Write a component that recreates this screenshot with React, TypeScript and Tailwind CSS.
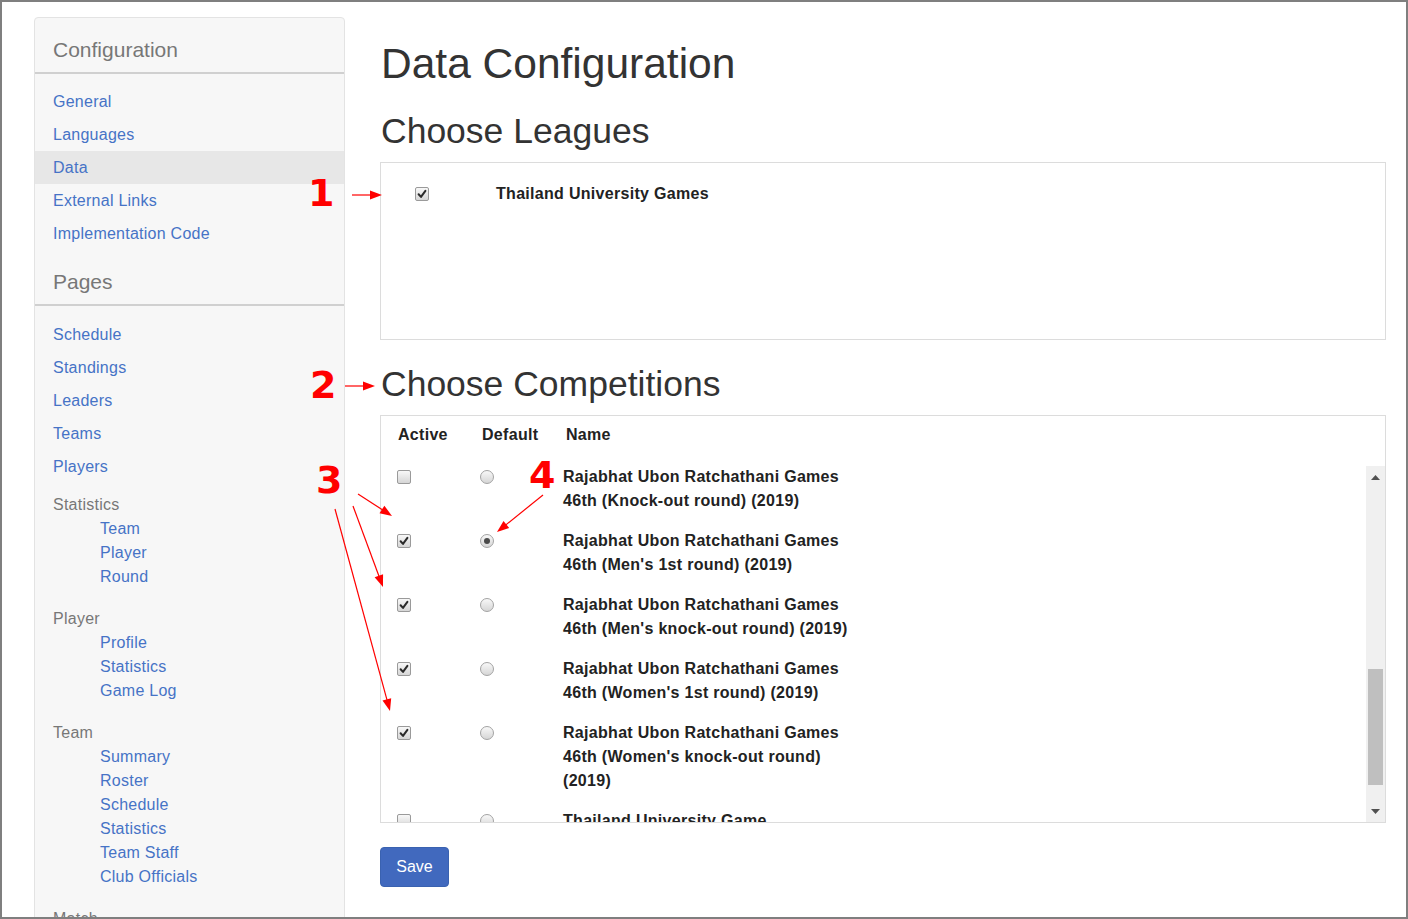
import React from "react";

const FONT = "font-['Liberation_Sans',Arial,sans-serif]";

function Checkbox({ checked }: { checked: boolean }) {
  return (
    <span className="flex h-[14px] w-[14px] items-center justify-center rounded-[2px] border border-[#9a9a9a] bg-linear-to-b from-[#f8f8f8] to-[#d6d6d6]">
      {checked && (
        <svg width="10" height="10" viewBox="0 0 10 10">
          <path d="M1.6 5.3 L4 7.9 L8.4 1.8" fill="none" stroke="#2b2b2b" strokeWidth="2" strokeLinecap="round" strokeLinejoin="round" />
        </svg>
      )}
    </span>
  );
}

function Radio({ checked }: { checked: boolean }) {
  return (
    <span className="flex h-[14px] w-[14px] items-center justify-center rounded-full border border-[#a3a3a3] bg-linear-to-b from-[#f8f8f8] to-[#d6d6d6]">
      {checked && <span className="h-[6px] w-[6px] rounded-full bg-[#4a4a4a]" />}
    </span>
  );
}

function NavLink({ label, active }: { label: string; active?: boolean }) {
  return (
    <div className={`flex h-[33px] items-center pl-[18px] text-[16px] tracking-[0.25px] text-[#4673c6] ${active ? "bg-[#e7e7e7]" : ""}`}>
      {label}
    </div>
  );
}

function SideHeader({ label }: { label: string }) {
  return (
    <div className="border-b-2 border-[#d0d0d0] pb-[10px] pl-[18px] pt-[20px] text-[21px] leading-6 text-[#777]">{label}</div>
  );
}

function Group({ label, items, first }: { label: string; items: string[]; first?: boolean }) {
  return (
    <div className={first ? "mt-[10px]" : "mt-[18px]"}>
      <div className="pl-[18px] text-[16px] leading-6 tracking-[0.25px] text-[#777]">{label}</div>
      {items.map((it) => (
        <div key={it} className="pl-[65px] text-[16px] leading-6 tracking-[0.25px] text-[#4673c6]">
          {it}
        </div>
      ))}
    </div>
  );
}

const rows: { active: boolean; def: boolean; lines: string[] }[] = [
  { active: false, def: false, lines: ["Rajabhat Ubon Ratchathani Games", "46th (Knock-out round) (2019)"] },
  { active: true, def: true, lines: ["Rajabhat Ubon Ratchathani Games", "46th (Men's 1st round) (2019)"] },
  { active: true, def: false, lines: ["Rajabhat Ubon Ratchathani Games", "46th (Men's knock-out round) (2019)"] },
  { active: true, def: false, lines: ["Rajabhat Ubon Ratchathani Games", "46th (Women's 1st round) (2019)"] },
  { active: true, def: false, lines: ["Rajabhat Ubon Ratchathani Games", "46th (Women's knock-out round)", "(2019)"] },
  { active: false, def: false, lines: ["Thailand University Game", "Thailand University Game"] },
];

function Arrow({ x1, y1, x2, y2 }: { x1: number; y1: number; x2: number; y2: number }) {
  const dx = x2 - x1;
  const dy = y2 - y1;
  const len = Math.sqrt(dx * dx + dy * dy);
  const ux = dx / len;
  const uy = dy / len;
  const hl = 12;
  const hw = 4.5;
  const bx = x2 - ux * hl;
  const by = y2 - uy * hl;
  const px = -uy * hw;
  const py = ux * hw;
  return (
    <g>
      <line x1={x1} y1={y1} x2={bx + ux * 1} y2={by + uy * 1} stroke="#ff0000" strokeWidth="1.2" />
      <polygon points={`${x2},${y2} ${bx + px},${by + py} ${bx - px},${by - py}`} fill="#ff0000" />
    </g>
  );
}

function Num({ n, x, y }: { n: string; x: number; y: number }) {
  return (
    <span
      className="absolute font-['DejaVu_Sans',sans-serif] text-[38px] font-bold leading-none text-[#ff0000]"
      style={{ left: x, top: y }}
    >
      {n}
    </span>
  );
}

export default function App() {
  return (
    <div className={`relative h-[919px] w-[1408px] overflow-hidden border-2 border-[#7f7f7f] bg-white ${FONT} text-[#333]`}>
      <div className="flex items-start pl-[32px] pt-[15px]">
        {/* Sidebar */}
        <div className="w-[311px] shrink-0 rounded-t-[4px] border border-[#e3e3e3] bg-[#f7f7f7] pb-10">
          <SideHeader label="Configuration" />
          <div className="pt-[11px]">
            <NavLink label="General" />
            <NavLink label="Languages" />
            <NavLink label="Data" active />
            <NavLink label="External Links" />
            <NavLink label="Implementation Code" />
          </div>
          <SideHeader label="Pages" />
          <div className="pt-[12px]">
            <NavLink label="Schedule" />
            <NavLink label="Standings" />
            <NavLink label="Leaders" />
            <NavLink label="Teams" />
            <NavLink label="Players" />
          </div>
          <Group first label="Statistics" items={["Team", "Player", "Round"]} />
          <Group label="Player" items={["Profile", "Statistics", "Game Log"]} />
          <Group label="Team" items={["Summary", "Roster", "Schedule", "Statistics", "Team Staff", "Club Officials"]} />
          <Group label="Match" items={["Summary"]} />
        </div>

        {/* Main */}
        <div className="ml-[35px] w-[1006px] pt-[24px]">
          <h1 className="pl-px text-[42.5px] leading-[46px] text-[#333]">Data Configuration</h1>
          <h2 className="mt-[25px] pl-px text-[35.5px] leading-[38px] text-[#333]">Choose Leagues</h2>
          <div className="mt-[12px] h-[178px] border border-[#dcdcdc] pt-[19px]">
            <div className="flex h-6 items-center">
              <div className="w-[115px] pl-[34px]">
                <Checkbox checked />
              </div>
              <div className="text-[16px] font-bold tracking-[0.3px] text-[#222]">Thailand University Games</div>
            </div>
          </div>

          <h2 className="mt-[25px] pl-px text-[35.5px] leading-[38px] text-[#333]">Choose Competitions</h2>
          <div className="mt-[12px] border border-[#dcdcdc]">
            <div className="flex h-[50px] pt-[7px] text-[16px] font-bold leading-6 tracking-[0.3px] text-[#222]">
              <div className="w-[101px] pl-[17px]">Active</div>
              <div className="w-[84px]">Default</div>
              <div>Name</div>
            </div>
            <div className="flex h-[356px]">
              <div className="flex-1 overflow-hidden">
                <div className="-mt-px">
                  {rows.map((r, i) => (
                    <div key={i} className="flex pb-4">
                      <div className="flex h-6 w-[99px] items-center pl-[16px]">
                        <Checkbox checked={r.active} />
                      </div>
                      <div className="flex h-6 w-[83px] items-center">
                        <Radio checked={r.def} />
                      </div>
                      <div className="text-[16px] font-bold leading-6 tracking-[0.3px] text-[#222]">
                        {r.lines.map((l, j) => (
                          <div key={j}>{l}</div>
                        ))}
                      </div>
                    </div>
                  ))}
                </div>
              </div>
              {/* scrollbar */}
              <div className="flex w-[19px] flex-col bg-[#f0f0f0]">
                <div className="flex h-[22px] items-center justify-center">
                  <svg width="9" height="5" viewBox="0 0 9 5">
                    <path d="M0 5 L4.5 0 L9 5 Z" fill="#505050" />
                  </svg>
                </div>
                <div className="flex-1 px-[2px]">
                  <div className="mt-[181px] h-[116px] bg-[#bfbfbf]" />
                </div>
                <div className="flex h-[22px] items-center justify-center">
                  <svg width="9" height="5" viewBox="0 0 9 5">
                    <path d="M0 0 L4.5 5 L9 0 Z" fill="#505050" />
                  </svg>
                </div>
              </div>
            </div>
          </div>

          <button className="mt-[24px] flex h-[40px] w-[69px] items-center justify-center rounded-[4px] border border-[#3a62b0] bg-[#4169be] text-[16px] text-white">
            Save
          </button>
        </div>
      </div>

      {/* Annotations overlay */}
      <div className="pointer-events-none absolute left-[-2px] top-[-2px] h-[919px] w-[1408px]">
        <svg className="absolute left-0 top-0" width="1408" height="919">
          <Arrow x1={352} y1={195} x2={382} y2={195} />
          <Arrow x1={345} y1={386} x2={375} y2={386} />
          <Arrow x1={358} y1={494} x2={392} y2={516} />
          <Arrow x1={353} y1={506} x2={383} y2={587} />
          <Arrow x1={335} y1={509} x2={390} y2={711} />
          <Arrow x1={543} y1={495} x2={497} y2={532} />
        </svg>
        <Num n="1" x={308} y={174} />
        <Num n="2" x={310} y={366} />
        <Num n="3" x={316} y={461} />
        <Num n="4" x={529} y={456} />
      </div>
    </div>
  );
}
